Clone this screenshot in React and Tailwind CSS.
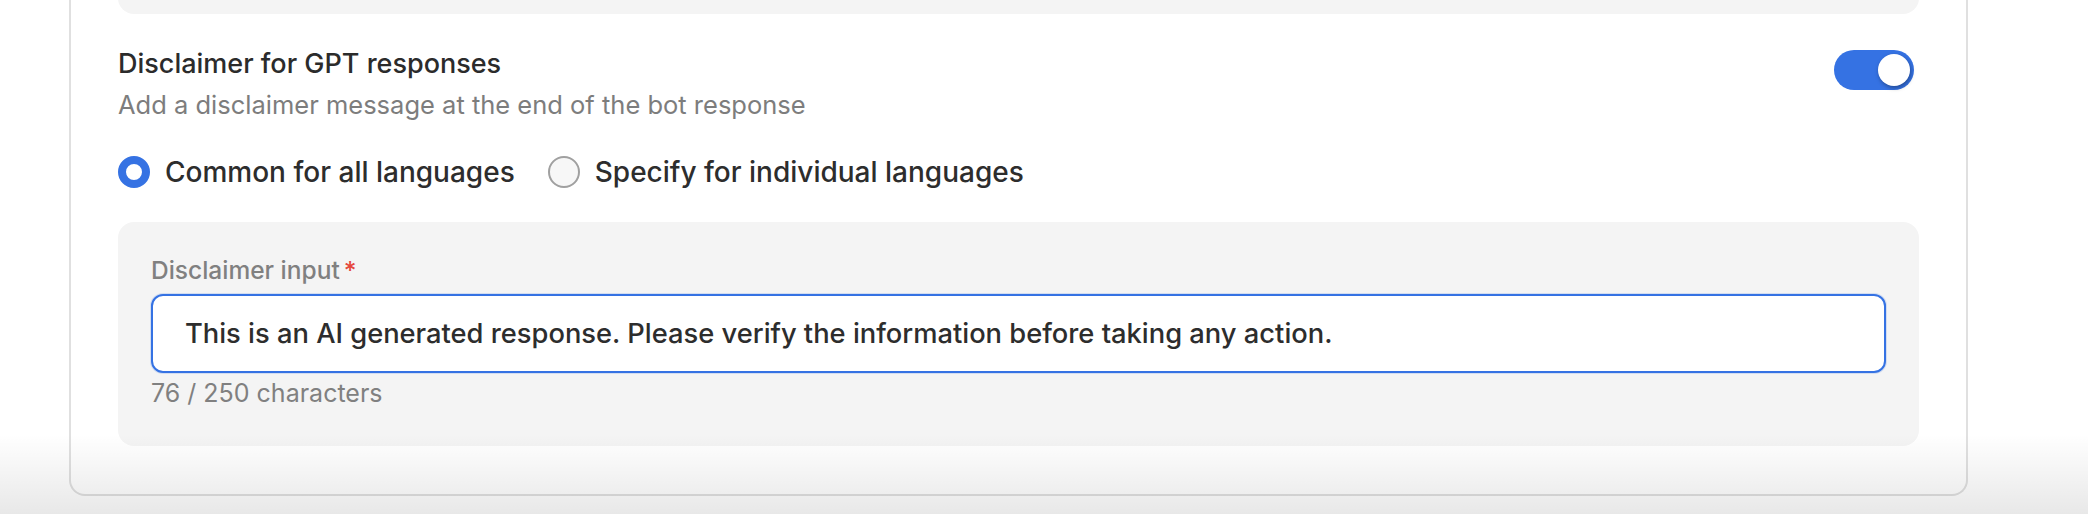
import React from 'react'

const Toggle = ({ on = true }) => {
  return (
    <button
      className={`relative flex items-center w-[80px] h-[40px] rounded-full p-[4px] ${on ? 'bg-[#3572e3] justify-end' : 'bg-[#cfcfcf] justify-start'}`}
    >
      <span className="w-[32px] h-[32px] rounded-full bg-white shadow-[1px_2px_4px_rgba(0,0,0,0.35)]" />
    </button>
  )
}

const Radio = ({ checked, label }) => {
  return (
    <label className="flex items-center gap-[15px] cursor-pointer">
      {checked ? (
        <span className="w-[32px] h-[32px] rounded-full border-[8px] border-[#3572e3] bg-white" />
      ) : (
        <span className="w-[32px] h-[32px] rounded-full border-2 border-[#a0a0a0] bg-[#f7f7f7]" />
      )}
      <span className="text-[28px] leading-[36px] font-medium text-[#2d2d2d]">{label}</span>
    </label>
  )
}

const App = () => {
  const text = 'This is an AI generated response. Please verify the information before taking any action.'

  return (
    <div className="relative w-[2088px] h-[514px] overflow-hidden bg-white font-['Inter',sans-serif]">
      <div className="ml-[69px] w-[1899px] border-2 border-t-0 border-[#e0e0e0] rounded-b-[16px] px-[47px] pb-[48px]">
        <div className="-mt-[60px] h-[74px] rounded-b-[16px] bg-[#f4f4f4]" />

        <div className="flex items-start justify-between mt-[32px]">
          <div>
            <h3 className="text-[27px] leading-[36px] font-medium text-[#2b2b2b]">
              Disclaimer for GPT responses
            </h3>
            <p className="mt-[7px] text-[25.5px] leading-[32px] text-[#7d7d7d]">
              Add a disclaimer message at the end of the bot response
            </p>
          </div>
          <div className="mt-[4px] mr-[5px]">
            <Toggle on />
          </div>
        </div>

        <div className="flex items-center gap-[33px] mt-[33px]">
          <Radio checked label="Common for all languages" />
          <Radio label="Specify for individual languages" />
        </div>

        <div className="mt-[32px] rounded-[16px] bg-[#f4f4f4] px-[33px] pt-[33px] pb-[37px]">
          <div className="flex items-start text-[24.5px] leading-[30px] font-medium text-[#808080]">
            Disclaimer input
            <span className="ml-[4px] text-[#e5483d]">*</span>
          </div>
          <div className="mt-[9px] h-[79px] flex items-center rounded-[12px] border-2 border-[#3572e3] bg-white px-[32px] shadow-[0_0_0_1px_rgba(53,114,227,0.18)]">
            <span className="text-[27.3px] leading-[36px] font-medium text-[#2d2d2d] whitespace-nowrap">{text}</span>
          </div>
          <p className="mt-[4px] text-[25px] leading-[32px] text-[#808080]">76 / 250 characters</p>
        </div>
      </div>

      <div className="pointer-events-none absolute left-0 right-0 bottom-0 h-[80px] bg-linear-to-b from-[rgba(0,0,0,0)] to-[rgba(0,0,0,0.09)]" />
    </div>
  )
}

export default App
